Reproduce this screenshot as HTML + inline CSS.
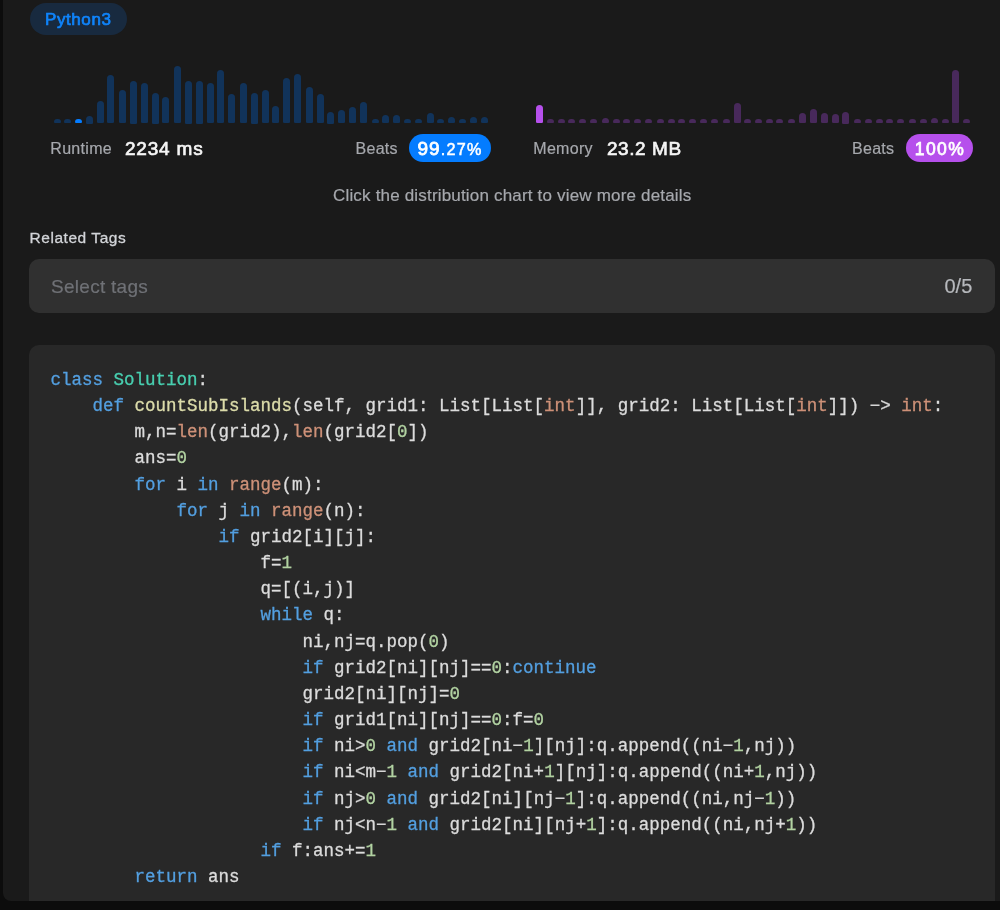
<!DOCTYPE html>
<html><head><meta charset="utf-8"><title>Submission</title>
<style>
html,body{margin:0;padding:0;}
body{will-change:transform;width:1000px;height:910px;overflow:hidden;background:#0c0c0c;position:relative;font-family:"Liberation Sans",sans-serif;}
.panel{position:absolute;left:2.5px;top:-20px;width:1100px;height:920.5px;background:#1a1a1a;border-radius:8px;overflow:hidden;}
.abs{position:absolute;white-space:nowrap;}
.pill-lang{left:27px;top:22.9px;width:97.5px;height:32px;border-radius:16px;background:#182a3f;color:#0f84fb;font-weight:normal;-webkit-text-stroke:0.7px #0f84fb;letter-spacing:0.6px;font-size:17px;line-height:34px;text-align:center;}
.bar{position:absolute;width:7px;border-radius:3.5px 3.5px 1.2px 1.2px;}
.lbl{color:#a6a8ad;font-size:16px;letter-spacing:0.3px;-webkit-text-stroke:0.2px;}
.val{color:#f5f5f5;font-size:19px;font-weight:normal;-webkit-text-stroke:0.65px #f5f5f5;letter-spacing:0.8px;}
.beats{height:28px;border-radius:14px;color:#fff;text-align:center;line-height:30px;}
.hint{color:#a6a8ad;font-size:17px;letter-spacing:0.18px;-webkit-text-stroke:0.2px;}
.rel{color:#d2d4d8;font-size:15.5px;letter-spacing:0.55px;-webkit-text-stroke:0.3px;}
.tags{left:26.6px;top:279px;width:966px;height:53.5px;border-radius:10px;background:#303030;}
.code{left:26.6px;top:365px;width:966px;height:700px;border-radius:10px;background:#282828;}
pre{margin:0;position:absolute;left:21.4px;top:22px;font-family:"Liberation Mono",monospace;font-size:17.5px;line-height:26.15px;color:#dcdcdc;-webkit-text-stroke:0.3px;}
.k{color:#539fe0} .c{color:#48cfb0} .f{color:#dcdcaa} .b{color:#ce9178} .n{color:#b2d3a2}
</style></head><body>
<div class="panel">
<div class="abs pill-lang">Python3</div>
<div style="position:absolute;left:-2.5px;top:20px;">
<div class="bar" style="left:53.60px;top:119.10px;height:4.40px;background:#11335a"></div>
<div class="bar" style="left:64.40px;top:119.10px;height:4.40px;background:#11335a"></div>
<div class="bar" style="left:75.00px;top:119.10px;height:4.40px;background:#047cff"></div>
<div class="bar" style="left:85.80px;top:115.50px;height:8.00px;background:#11335a"></div>
<div class="bar" style="left:96.60px;top:100.70px;height:22.80px;background:#11335a"></div>
<div class="bar" style="left:107.40px;top:75.10px;height:48.40px;background:#11335a"></div>
<div class="bar" style="left:119.40px;top:89.90px;height:33.60px;background:#11335a"></div>
<div class="bar" style="left:130.20px;top:80.50px;height:43.00px;background:#11335a"></div>
<div class="bar" style="left:141.00px;top:83.10px;height:40.40px;background:#11335a"></div>
<div class="bar" style="left:151.80px;top:92.50px;height:31.00px;background:#11335a"></div>
<div class="bar" style="left:162.40px;top:96.70px;height:26.80px;background:#11335a"></div>
<div class="bar" style="left:174.40px;top:65.90px;height:57.60px;background:#11335a"></div>
<div class="bar" style="left:185.00px;top:80.50px;height:43.00px;background:#11335a"></div>
<div class="bar" style="left:195.80px;top:80.50px;height:43.00px;background:#11335a"></div>
<div class="bar" style="left:206.60px;top:83.10px;height:40.40px;background:#11335a"></div>
<div class="bar" style="left:217.40px;top:69.90px;height:53.60px;background:#11335a"></div>
<div class="bar" style="left:228.20px;top:93.90px;height:29.60px;background:#11335a"></div>
<div class="bar" style="left:240.20px;top:83.10px;height:40.40px;background:#11335a"></div>
<div class="bar" style="left:251.00px;top:92.50px;height:31.00px;background:#11335a"></div>
<div class="bar" style="left:261.80px;top:89.90px;height:33.60px;background:#11335a"></div>
<div class="bar" style="left:272.40px;top:105.90px;height:17.60px;background:#11335a"></div>
<div class="bar" style="left:283.00px;top:77.90px;height:45.60px;background:#11335a"></div>
<div class="bar" style="left:293.80px;top:73.90px;height:49.60px;background:#11335a"></div>
<div class="bar" style="left:305.80px;top:87.10px;height:36.40px;background:#11335a"></div>
<div class="bar" style="left:316.60px;top:93.90px;height:29.60px;background:#11335a"></div>
<div class="bar" style="left:327.40px;top:111.50px;height:12.00px;background:#11335a"></div>
<div class="bar" style="left:338.20px;top:109.90px;height:13.60px;background:#11335a"></div>
<div class="bar" style="left:349.00px;top:107.30px;height:16.20px;background:#11335a"></div>
<div class="bar" style="left:359.80px;top:101.90px;height:21.60px;background:#11335a"></div>
<div class="bar" style="left:371.80px;top:119.10px;height:4.40px;background:#11335a"></div>
<div class="bar" style="left:382.40px;top:115.30px;height:8.20px;background:#11335a"></div>
<div class="bar" style="left:393.00px;top:115.30px;height:8.20px;background:#11335a"></div>
<div class="bar" style="left:403.80px;top:119.10px;height:4.40px;background:#11335a"></div>
<div class="bar" style="left:414.60px;top:119.10px;height:4.40px;background:#11335a"></div>
<div class="bar" style="left:426.60px;top:112.90px;height:10.60px;background:#11335a"></div>
<div class="bar" style="left:437.40px;top:119.10px;height:4.40px;background:#11335a"></div>
<div class="bar" style="left:448.20px;top:116.70px;height:6.80px;background:#11335a"></div>
<div class="bar" style="left:459.00px;top:119.10px;height:4.40px;background:#11335a"></div>
<div class="bar" style="left:469.80px;top:116.70px;height:6.80px;background:#11335a"></div>
<div class="bar" style="left:480.60px;top:116.70px;height:6.80px;background:#11335a"></div>
<div class="bar" style="left:536.00px;top:104.60px;height:18.90px;background:#b650ec"></div>
<div class="bar" style="left:546.80px;top:119.10px;height:4.40px;background:#48295b"></div>
<div class="bar" style="left:557.60px;top:119.10px;height:4.40px;background:#48295b"></div>
<div class="bar" style="left:568.40px;top:119.10px;height:4.40px;background:#48295b"></div>
<div class="bar" style="left:579.20px;top:119.10px;height:4.40px;background:#48295b"></div>
<div class="bar" style="left:589.80px;top:119.10px;height:4.40px;background:#48295b"></div>
<div class="bar" style="left:601.80px;top:118.30px;height:5.20px;background:#48295b"></div>
<div class="bar" style="left:612.60px;top:119.10px;height:4.40px;background:#48295b"></div>
<div class="bar" style="left:623.40px;top:119.10px;height:4.40px;background:#48295b"></div>
<div class="bar" style="left:634.20px;top:119.10px;height:4.40px;background:#48295b"></div>
<div class="bar" style="left:644.80px;top:119.10px;height:4.40px;background:#48295b"></div>
<div class="bar" style="left:656.80px;top:119.10px;height:4.40px;background:#48295b"></div>
<div class="bar" style="left:667.60px;top:119.10px;height:4.40px;background:#48295b"></div>
<div class="bar" style="left:678.40px;top:119.10px;height:4.40px;background:#48295b"></div>
<div class="bar" style="left:689.20px;top:119.10px;height:4.40px;background:#48295b"></div>
<div class="bar" style="left:700.00px;top:119.10px;height:4.40px;background:#48295b"></div>
<div class="bar" style="left:710.80px;top:119.10px;height:4.40px;background:#48295b"></div>
<div class="bar" style="left:722.80px;top:119.10px;height:4.40px;background:#48295b"></div>
<div class="bar" style="left:733.60px;top:103.30px;height:20.20px;background:#48295b"></div>
<div class="bar" style="left:744.20px;top:119.10px;height:4.40px;background:#48295b"></div>
<div class="bar" style="left:754.80px;top:119.10px;height:4.40px;background:#48295b"></div>
<div class="bar" style="left:765.60px;top:119.10px;height:4.40px;background:#48295b"></div>
<div class="bar" style="left:776.40px;top:119.10px;height:4.40px;background:#48295b"></div>
<div class="bar" style="left:788.40px;top:119.10px;height:4.40px;background:#48295b"></div>
<div class="bar" style="left:799.20px;top:112.70px;height:10.80px;background:#48295b"></div>
<div class="bar" style="left:810.00px;top:108.70px;height:14.80px;background:#48295b"></div>
<div class="bar" style="left:820.80px;top:112.70px;height:10.80px;background:#48295b"></div>
<div class="bar" style="left:831.60px;top:114.10px;height:9.40px;background:#48295b"></div>
<div class="bar" style="left:842.20px;top:111.50px;height:12.00px;background:#48295b"></div>
<div class="bar" style="left:854.20px;top:119.10px;height:4.40px;background:#48295b"></div>
<div class="bar" style="left:864.80px;top:119.10px;height:4.40px;background:#48295b"></div>
<div class="bar" style="left:875.60px;top:119.10px;height:4.40px;background:#48295b"></div>
<div class="bar" style="left:886.40px;top:119.10px;height:4.40px;background:#48295b"></div>
<div class="bar" style="left:897.20px;top:119.10px;height:4.40px;background:#48295b"></div>
<div class="bar" style="left:909.20px;top:119.10px;height:4.40px;background:#48295b"></div>
<div class="bar" style="left:920.00px;top:119.10px;height:4.40px;background:#48295b"></div>
<div class="bar" style="left:930.80px;top:118.30px;height:5.20px;background:#48295b"></div>
<div class="bar" style="left:941.60px;top:119.10px;height:4.40px;background:#48295b"></div>
<div class="bar" style="left:952.20px;top:69.90px;height:53.60px;background:#48295b"></div>
<div class="bar" style="left:963.00px;top:119.10px;height:4.40px;background:#48295b"></div>
</div>
</div>
<div class="abs lbl" style="left:50.3px;top:140px;">Runtime</div>
<div class="abs val" style="left:125px;top:138px;">2234 ms</div>
<div class="abs lbl" style="left:355.5px;top:140px;">Beats</div>
<div class="abs beats" style="left:409px;top:134px;width:82px;background:#047cff;"><span style="font-size:19px;-webkit-text-stroke:0.8px #fff;letter-spacing:1.1px">99</span><span style="font-size:16.2px;-webkit-text-stroke:0.5px #fff;letter-spacing:1.25px">.27%</span></div>
<div class="abs lbl" style="left:533.3px;top:140px;">Memory</div>
<div class="abs val" style="left:607px;top:138px;letter-spacing:0.55px;">23.2 MB</div>
<div class="abs lbl" style="left:852px;top:140px;">Beats</div>
<div class="abs beats" style="left:906px;top:134px;width:67px;background:#b650ec;font-size:17.5px;-webkit-text-stroke:0.75px #fff;letter-spacing:1.4px;padding-left:1px;box-sizing:border-box">100%</div>
<div class="abs hint" style="left:333px;top:185.5px;">Click the distribution chart to view more details</div>
<div class="abs rel" style="left:29.5px;top:229px;">Related Tags</div>
<div style="position:absolute;left:2.5px;top:-20px;width:1100px;height:920.5px;border-radius:8px;overflow:hidden;">
<div class="abs tags"></div>
<div class="abs code"><pre><span class="k">class</span> <span class="c">Solution</span>:
    <span class="k">def</span> <span class="f">countSubIslands</span>(self, grid1: List[List[<span class="b">int</span>]], grid2: List[List[<span class="b">int</span>]]) &#8722;&gt; <span class="b">int</span>:
        m,n=<span class="b">len</span>(grid2),<span class="b">len</span>(grid2[<span class="n">0</span>])
        ans=<span class="n">0</span>
        <span class="k">for</span> i <span class="k">in</span> <span class="b">range</span>(m):
            <span class="k">for</span> j <span class="k">in</span> <span class="b">range</span>(n):
                <span class="k">if</span> grid2[i][j]:
                    f=<span class="n">1</span>
                    q=[(i,j)]
                    <span class="k">while</span> q:
                        ni,nj=q.pop(<span class="n">0</span>)
                        <span class="k">if</span> grid2[ni][nj]==<span class="n">0</span>:<span class="k">continue</span>
                        grid2[ni][nj]=<span class="n">0</span>
                        <span class="k">if</span> grid1[ni][nj]==<span class="n">0</span>:f=<span class="n">0</span>
                        <span class="k">if</span> ni&gt;<span class="n">0</span> <span class="k">and</span> grid2[ni&#8722;<span class="n">1</span>][nj]:q.append((ni&#8722;<span class="n">1</span>,nj))
                        <span class="k">if</span> ni&lt;m&#8722;<span class="n">1</span> <span class="k">and</span> grid2[ni+<span class="n">1</span>][nj]:q.append((ni+<span class="n">1</span>,nj))
                        <span class="k">if</span> nj&gt;<span class="n">0</span> <span class="k">and</span> grid2[ni][nj&#8722;<span class="n">1</span>]:q.append((ni,nj&#8722;<span class="n">1</span>))
                        <span class="k">if</span> nj&lt;n&#8722;<span class="n">1</span> <span class="k">and</span> grid2[ni][nj+<span class="n">1</span>]:q.append((ni,nj+<span class="n">1</span>))
                    <span class="k">if</span> f:ans+=<span class="n">1</span>
        <span class="k">return</span> ans</pre></div>
</div>
<div class="abs" style="left:51px;top:275.5px;color:#6f7176;font-size:19px;letter-spacing:0.28px;-webkit-text-stroke:0.2px;">Select tags</div>
<div class="abs" style="left:944.5px;top:275px;color:#b6b8bc;font-size:20px;-webkit-text-stroke:0.2px;">0/5</div>
</body></html>
